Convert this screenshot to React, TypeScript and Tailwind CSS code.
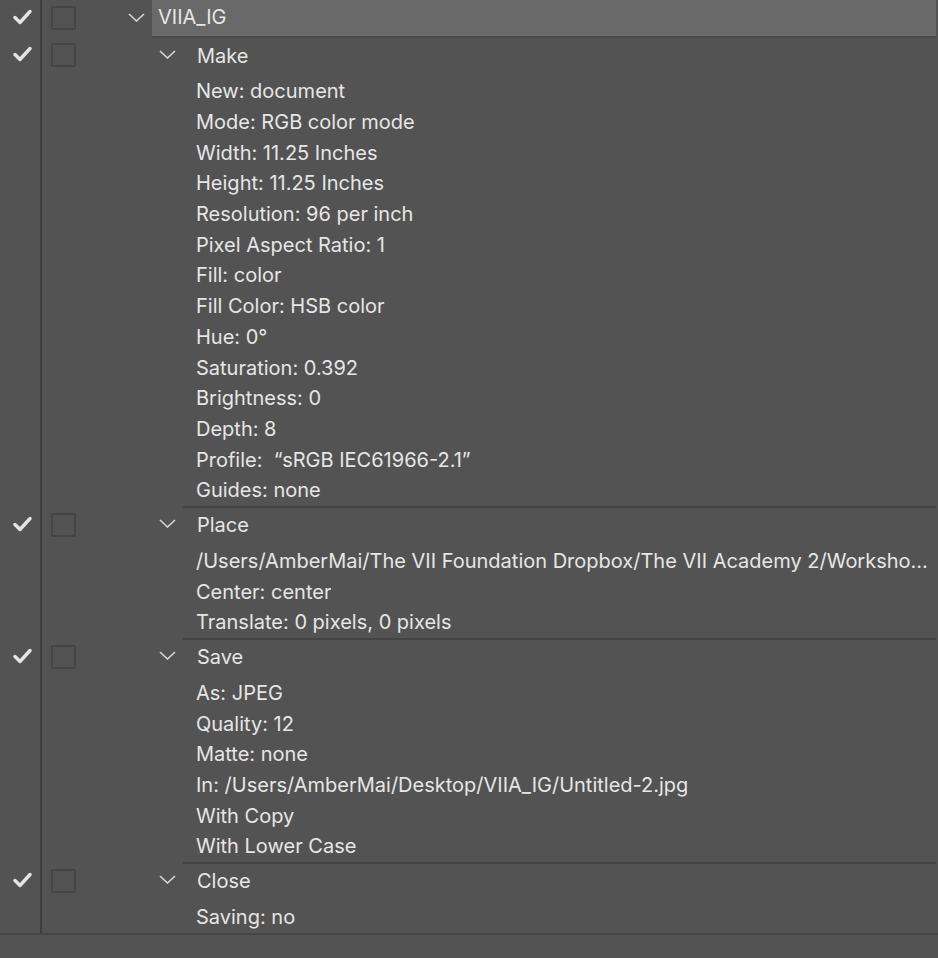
import React from 'react';

interface Group {
  name: string;
  items: string[];
}

const groups: Group[] = [
  {
    name: 'Make',
    items: [
      'New: document',
      'Mode: RGB color mode',
      'Width: 11.25 Inches',
      'Height: 11.25 Inches',
      'Resolution: 96 per inch',
      'Pixel Aspect Ratio: 1',
      'Fill: color',
      'Fill Color: HSB color',
      'Hue: 0°',
      'Saturation: 0.392',
      'Brightness: 0',
      'Depth: 8',
      'Profile:  \u201csRGB IEC61966-2.1\u201d',
      'Guides: none',
    ],
  },
  {
    name: 'Place',
    items: [
      '/Users/AmberMai/The VII Foundation Dropbox/The VII Academy 2/Worksho...',
      'Center: center',
      'Translate: 0 pixels, 0 pixels',
    ],
  },
  {
    name: 'Save',
    items: [
      'As: JPEG',
      'Quality: 12',
      'Matte: none',
      'In: /Users/AmberMai/Desktop/VIIA_IG/Untitled-2.jpg',
      'With Copy',
      'With Lower Case',
    ],
  },
  {
    name: 'Close',
    items: ['Saving: no'],
  },
];

const Check = () => (
  <svg width="19" height="16" viewBox="0 0 19 16" fill="none">
    <path d="M2 8.5 L7 13.5 L17 2.5" stroke="#e4e4e4" strokeWidth="3.4" strokeLinecap="round" strokeLinejoin="round" />
  </svg>
);

const Chevron = () => (
  <svg width="17" height="9" viewBox="0 0 17 9" fill="none">
    <path d="M1 1 L8.5 8 L16 1" stroke="#d6d6d6" strokeWidth="1.6" />
  </svg>
);

const Box = () => <div className="w-[25px] h-[24px] rounded-[2px] border-2 border-[#454545]" />;

const Gutter = ({ children }: { children?: React.ReactNode }) => (
  <div className="w-[42px] shrink-0 self-stretch border-r-2 border-[#3e3e3e] flex items-center justify-center pl-[4px]">
    {children}
  </div>
);

export default function App() {
  return (
    <div
      className="w-[938px] h-[958px] bg-[#535353] text-[#e6e6e6] text-[20px] overflow-hidden"
      style={{ fontFamily: 'Inter, "Noto Sans", sans-serif' }}
    >
      {/* top set row */}
      <div className="flex h-[38px]">
        <Gutter>
          <div className="pb-[4px]">
            <Check />
          </div>
        </Gutter>
        <div className="w-[34px] flex items-center pl-[9px] pb-[3px]">
          <Box />
        </div>
        <div className="w-[76px] flex items-center justify-end pr-[7px] pb-[4px]">
          <Chevron />
        </div>
        <div className="flex-1 mr-[2px] flex flex-col">
          <div className="h-[36px] bg-[#696969] flex items-center pl-[6px] pb-[2px]">VIIA_IG</div>
          <div className="h-[2px] bg-[#4a4a4a]" />
        </div>
      </div>

      {groups.map((g, gi) => (
        <div key={g.name}>
          {gi > 0 && (
            <div className="flex h-[2px]">
              <Gutter />
              <div className="w-[141px]" />
              <div className="flex-1 mr-[2px] bg-[#444444]" />
            </div>
          )}
          <div className="flex h-[38px]">
            <Gutter>
              <div className="pb-[6px]">
                <Check />
              </div>
            </Gutter>
            <div className="w-[34px] flex items-center pl-[9px] pb-[4px]">
              <Box />
            </div>
            <div className="w-[108px] flex items-center justify-end pr-[8px] pb-[6px]">
              <Chevron />
            </div>
            <div className="flex-1 flex items-center pl-[13px] pb-[3px]">{g.name}</div>
          </div>
          {g.items.map((it, i) => (
            <div key={i} className="flex h-[30.7px]">
              <Gutter />
              <div className="flex-1 min-w-0 flex items-center pl-[154px] pr-[2px]">
                <span className="whitespace-pre overflow-hidden">{it}</span>
              </div>
            </div>
          ))}
        </div>
      ))}

      <div className="h-[2px] bg-[#464646]" />
    </div>
  );
}
